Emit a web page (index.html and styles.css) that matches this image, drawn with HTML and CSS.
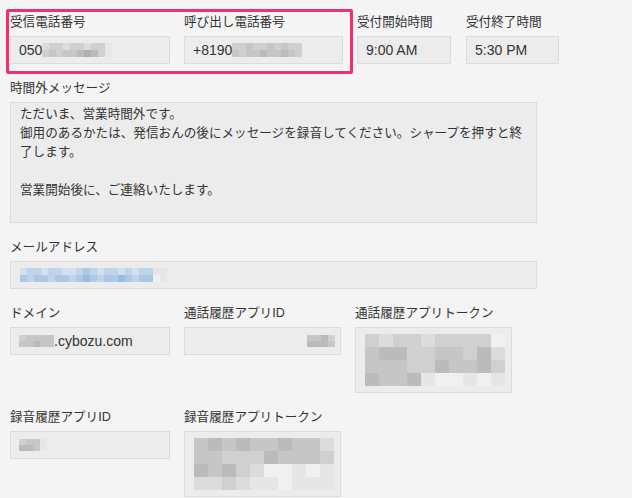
FILE: index.html
```html
<!DOCTYPE html>
<html lang="ja">

<head>
    <meta charset="UTF-8">
    <meta name="viewport" content="width=device-width, initial-scale=1.0">
    <title>設定</title>
    <link rel="stylesheet" href="styles.css">
</head>

<body>
    <div class="form">
        <div class="row">
            <div class="highlight">
                <div class="field w160">
                    <div class="label">受信電話番号</div>
                    <div class="box">050<span class="mosaic cols10">
                        <i class="s0"></i><i class="s1"></i><i class="s1"></i><i class="s0"></i><i class="s1"></i><i class="s1"></i><i class="s0"></i><i class="s1"></i><i class="s1"></i><i class="e"></i>
                        <i class="s1"></i><i class="s2"></i><i class="s1"></i><i class="s2"></i><i class="s2"></i><i class="s3"></i><i class="s4"></i><i class="s3"></i><i class="s1"></i><i class="e"></i>
                    </span></div>
                </div>
                <div class="field w159">
                    <div class="label">呼び出し電話番号</div>
                    <div class="box">+8190<span class="mosaic cols10">
                        <i class="s1"></i><i class="s1"></i><i class="s2"></i><i class="s1"></i><i class="s1"></i><i class="s2"></i><i class="s1"></i><i class="s2"></i><i class="s1"></i><i class="s1"></i>
                        <i class="s2"></i><i class="s1"></i><i class="s2"></i><i class="s2"></i><i class="s3"></i><i class="s2"></i><i class="s2"></i><i class="s3"></i><i class="s2"></i><i class="s1"></i>
                    </span></div>
                </div>
            </div>
            <div class="field w94">
                <div class="label">受付開始時間</div>
                <div class="box">9:00 AM</div>
            </div>
            <div class="field w93 wide-gap">
                <div class="label">受付終了時間</div>
                <div class="box">5:30 PM</div>
            </div>
        </div>

        <div class="field w527">
            <div class="label">時間外メッセージ</div>
            <div class="message">ただいま、営業時間外です。
御用のあるかたは、発信おんの後にメッセージを録音してください。シャープを押すと終了します。

営業開始後に、ご連絡いたします。</div>
        </div>

        <div class="field w527">
            <div class="label">メールアドレス</div>
            <div class="box"><span class="mosaic cols21 blue">
                <i class="b0"></i><i class="b1"></i><i class="b1"></i><i class="b0"></i><i class="b1"></i><i class="b1"></i><i class="b0"></i><i class="b0"></i><i class="b1"></i><i class="b2"></i><i class="b1"></i><i class="b0"></i><i class="b1"></i><i class="b1"></i><i class="b0"></i><i class="b1"></i><i class="b0"></i><i class="b1"></i><i class="b1"></i><i class="e"></i><i class="e"></i>
                <i class="b2"></i><i class="b1"></i><i class="b2"></i><i class="b2"></i><i class="b1"></i><i class="b2"></i><i class="b2"></i><i class="b1"></i><i class="b2"></i><i class="b3"></i><i class="b2"></i><i class="b1"></i><i class="b2"></i><i class="b2"></i><i class="b3"></i><i class="b2"></i><i class="b1"></i><i class="b2"></i><i class="b2"></i><i class="f"></i><i class="e"></i>
            </span></div>
        </div>

        <div class="row">
            <div class="field w160">
                <div class="label">ドメイン</div>
                <div class="box"><span class="mosaic cols5 small">
                    <i class="s1"></i><i class="s2"></i><i class="s2"></i><i class="s2"></i><i class="s2"></i>
                    <i class="s2"></i><i class="s2"></i><i class="s3"></i><i class="s2"></i><i class="s2"></i>
                </span>.cybozu.com</div>
            </div>
            <div class="field w157">
                <div class="label">通話履歴アプリID</div>
                <div class="box end"><span class="mosaic cols4 small">
                    <i class="s2"></i><i class="s2"></i><i class="s3"></i><i class="s1"></i>
                    <i class="s3"></i><i class="s3"></i><i class="s3"></i><i class="s2"></i>
                </span></div>
            </div>
            <div class="field w157">
                <div class="label">通話履歴アプリトークン</div>
                <div class="token"><span class="mosaic cols10 big">
                    <i class="s1"></i><i class="s0"></i><i class="s1"></i><i class="s1"></i><i class="s0"></i><i class="s1"></i><i class="s1"></i><i class="s1"></i><i class="s1"></i><i class="f"></i>
                    <i class="s2"></i><i class="s3"></i><i class="s3"></i><i class="s1"></i><i class="s1"></i><i class="s2"></i><i class="s2"></i><i class="s1"></i><i class="s3"></i><i class="s0"></i>
                    <i class="s2"></i><i class="s2"></i><i class="s2"></i><i class="s1"></i><i class="s1"></i><i class="s3"></i><i class="s2"></i><i class="s2"></i><i class="s3"></i><i class="s1"></i>
                    <i class="s3"></i><i class="s2"></i><i class="s2"></i><i class="s3"></i><i class="e"></i><i class="f"></i><i class="f"></i><i class="e"></i><i class="f"></i><i class="e"></i>
                </span></div>
            </div>
        </div>

        <div class="row">
            <div class="field w160">
                <div class="label">録音履歴アプリID</div>
                <div class="box"><span class="mosaic cols4 small">
                    <i class="s1"></i><i class="s2"></i><i class="s2"></i><i class="e"></i>
                    <i class="s3"></i><i class="s3"></i><i class="s2"></i><i class="e"></i>
                </span></div>
            </div>
            <div class="field w157">
                <div class="label">録音履歴アプリトークン</div>
                <div class="token"><span class="mosaic cols10 big">
                    <i class="s2"></i><i class="s3"></i><i class="s2"></i><i class="s3"></i><i class="s2"></i><i class="s2"></i><i class="s3"></i><i class="s2"></i><i class="s2"></i><i class="s0"></i>
                    <i class="s2"></i><i class="s2"></i><i class="s1"></i><i class="s1"></i><i class="s1"></i><i class="s3"></i><i class="s2"></i><i class="s2"></i><i class="s2"></i><i class="s1"></i>
                    <i class="s3"></i><i class="s2"></i><i class="s3"></i><i class="s1"></i><i class="s0"></i><i class="f"></i><i class="f"></i><i class="e"></i><i class="f"></i><i class="e"></i>
                    <i class="s0"></i><i class="s0"></i><i class="s1"></i><i class="s0"></i><i class="e"></i><i class="e"></i><i class="f"></i><i class="e"></i><i class="e"></i><i class="e"></i>
                </span></div>
            </div>
        </div>
    </div>
</body>

</html>
```

FILE: styles.css
```css
body
{
    margin: 0;
    background-color: #f4f4f4;
    color: #333333;
    font-family: "Liberation Sans", "Noto Sans CJK JP", sans-serif;
}

.form
{
    display: flex;
    flex-direction: column;
    align-items: flex-start;
    gap: 15px;
    padding: 13px 0 0 10px;
}

.row
{
    display: flex;
    align-items: flex-start;
    gap: 14px;
}

.highlight
{
    position: relative;
    display: flex;
    gap: 14px;
}

/* red annotation frame drawn over the first two fields */
.highlight::after
{
    content: "";
    position: absolute;
    top: -4px;
    left: -4px;
    right: -10px;
    bottom: -10px;
    border: 3px solid #f2306f;
    border-radius: 2px;
    pointer-events: none;
}

.wide-gap
{
    margin-left: 1px;
}

.label
{
    font-size: 12.6px;
    line-height: 18px;
    margin-bottom: 5px;
    white-space: nowrap;
}

.w160 { width: 160px; }
.w159 { width: 159px; }
.w157 { width: 157px; }
.w94 { width: 94px; }
.w93 { width: 93px; }
.w527 { width: 527px; }

.box,
.token,
.message
{
    box-sizing: border-box;
    background-color: #ececec;
    border: 1px solid #dcdcdc;
}

.box
{
    display: flex;
    align-items: center;
    height: 28px;
    padding: 0 8px;
    font-size: 14px;
    white-space: nowrap;
}

.box.end
{
    justify-content: flex-end;
    padding-right: 5px;
}

.token
{
    height: 66px;
    padding: 5px 9px;
}

.message
{
    height: 121px;
    padding: 2px 9px;
    font-size: 12.6px;
    line-height: 19px;
    white-space: pre-wrap;
}

/* pixelated (blurred-out) values */
.mosaic
{
    display: inline-grid;
    grid-auto-rows: 7px;
}

.mosaic i
{
    display: block;
}

.cols10 { grid-template-columns: repeat(10, 7px); }
.cols21 { grid-template-columns: repeat(21, 7px); }
.cols5 { grid-template-columns: repeat(5, 7px); }
.cols4 { grid-template-columns: repeat(4, 7px); }

.mosaic.small
{
    grid-auto-rows: 6px;
}

.mosaic.big
{
    grid-template-columns: repeat(10, 14px);
    grid-auto-rows: 13px;
}

.mosaic.blue
{
    margin-left: 1px;
}

.s0 { background-color: #dcdcdc; }
.s1 { background-color: #d0d0d0; }
.s2 { background-color: #c6c6c6; }
.s3 { background-color: #bbbbbb; }
.s4 { background-color: #afafaf; }
.e { background-color: #e6e6e6; }
.f { background-color: #f0f0f0; }

.b0 { background-color: #d2dfed; }
.b1 { background-color: #bfd3e9; }
.b2 { background-color: #adc8e5; }
.b3 { background-color: #9abce1; }
```
